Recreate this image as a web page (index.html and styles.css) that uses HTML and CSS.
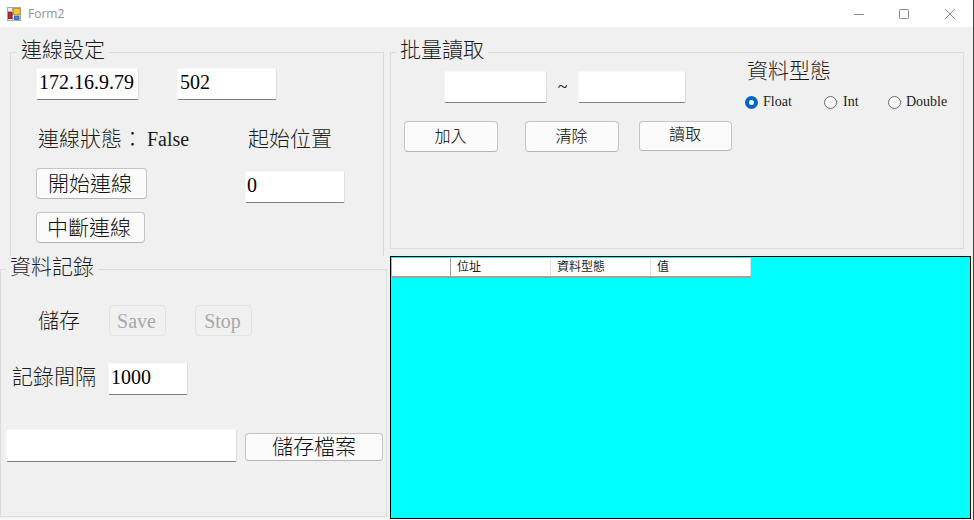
FILE: index.html
```html
<!DOCTYPE html>
<html>
    <head>
        <meta charset="utf-8">
        <title>Form2</title>
        <link rel="stylesheet" href="styles.css">
    </head>
    <body>
        <header class="titlebar">
            <svg class="app-icon" width="14" height="14" viewBox="0 0 14 14">
                <rect x="0.5" y="0.5" width="13" height="13" fill="#ececec" stroke="#a8a8a8"/>
                <path d="M0 4.5H6M5.5 0V14M0 11.5H14" stroke="#b4b4b4" fill="none"/>
                <rect x="6.5" y="1.5" width="6.5" height="6" fill="#f7c928" stroke="#b98a10" stroke-width="0.8"/>
                <rect x="1.5" y="5.5" width="3.5" height="6" fill="#c8262a" stroke="#7d1618" stroke-width="0.8"/>
                <rect x="7.5" y="9" width="4.5" height="3.5" fill="#3f7fe0" stroke="#2a5ca8" stroke-width="0.8"/>
            </svg>
            <span class="title">Form2</span>
            <div class="win-buttons">
                <svg width="10" height="10" viewBox="0 0 10 10"><path d="M0 5.5H10" stroke="#8a8a8a"/></svg>
                <svg width="10" height="10" viewBox="0 0 10 10"><rect x="0.5" y="0.5" width="9" height="9" rx="1" fill="none" stroke="#8a8a8a"/></svg>
                <svg class="win-close" width="10" height="10" viewBox="0 0 10 10"><path d="M0 0L10 10M10 0L0 10" stroke="#8a8a8a"/></svg>
            </div>
        </header>

        <main class="client">
            <div class="left">
                <fieldset class="group conn">
                    <legend>連線設定</legend>
                    <div class="conn-top">
                        <input class="box ip" value="172.16.9.79">
                        <input class="box port" value="502">
                    </div>
                    <div class="conn-status">
                        <span class="label state">連線狀態：</span>
                        <span class="false">False</span>
                        <span class="label start-label">起始位置</span>
                    </div>
                    <div class="conn-actions">
                        <div class="conn-buttons">
                            <button class="btn open">開始連線</button>
                            <button class="btn stop-conn">中斷連線</button>
                        </div>
                        <input class="box start" value="0">
                    </div>
                </fieldset>

                <fieldset class="group log">
                    <legend>資料記錄</legend>
                    <div class="log-save">
                        <span class="label save-label">儲存</span>
                        <button class="btn off" disabled>Save</button>
                        <button class="btn off" disabled>Stop</button>
                    </div>
                    <div class="log-interval">
                        <span class="label interval-label">記錄間隔</span>
                        <input class="box interval" value="1000">
                    </div>
                    <div class="log-file">
                        <input class="box path">
                        <button class="btn file">儲存檔案</button>
                    </div>
                </fieldset>
            </div>

            <div class="right">
                <fieldset class="group batch">
                    <legend>批量讀取</legend>
                    <div class="batch-body">
                        <div class="batch-main">
                            <div class="range">
                                <input class="box from">
                                <span class="tilde">~</span>
                                <input class="box to">
                            </div>
                            <div class="batch-buttons">
                                <button class="btn small">加入</button>
                                <button class="btn small clear">清除</button>
                                <button class="btn small read">讀取</button>
                            </div>
                        </div>
                        <div class="types">
                            <div class="label">資料型態</div>
                            <div class="radios">
                                <label class="radio r-float"><input type="radio" name="type" checked>Float</label>
                                <label class="radio r-int"><input type="radio" name="type">Int</label>
                                <label class="radio"><input type="radio" name="type">Double</label>
                            </div>
                        </div>
                    </div>
                </fieldset>

                <div class="grid">
                    <div class="grid-head">
                        <div class="cell first"></div>
                        <div class="cell">位址</div>
                        <div class="cell">資料型態</div>
                        <div class="cell">值</div>
                    </div>
                </div>
            </div>
        </main>
    </body>
</html>
```

FILE: styles.css
```css
*{
    box-sizing: border-box;
}
body{
    margin: 0;
    width: 974px;
    height: 520px;
    overflow: hidden;
    background: #f8f8f8;
    border-right: 1px solid #444;
    color: #1c1c1c;
    font-family: "Liberation Serif", "Noto Sans CJK TC", serif;
    font-size: 20px;
}

.titlebar{
    display: flex;
    align-items: center;
    height: 27px;
    padding-left: 7px;
    background: #fff;
}
.app-icon{
    margin-right: 7px;
}
.title{
    font: 12px "Open Sans", sans-serif;
    color: #8f8f8f;
}
.win-buttons{
    display: flex;
    gap: 35px;
    margin-left: auto;
    margin-right: 18px;
}
.win-close{
    margin-left: 1px;
}

.client{
    display: flex;
    height: 491px;
    background: #f0f0f0;
}
.left{
    width: 390px;
    padding-top: 13px;
}
.right{
    width: 583px;
    padding-top: 13px;
}

.group{
    margin: 0;
    padding: 0;
    min-width: 0;
    border: 1px solid #dcdcdc;
}
.group legend{
    margin-left: 6px;
    padding: 0 4px 4px;
    height: 24px;
    line-height: 20px;
    font-size: 21px;
    font-weight: 300;
}
.label{
    font-size: 21px;
    font-weight: 300;
    line-height: 24px;
}

.box{
    display: block;
    padding: 0 2px 4px;
    height: 32px;
    background: #fff;
    border: 1px solid #f8f8f8;
    border-right-color: #dedede;
    border-bottom-color: #808080;
    border-radius: 2px;
    color: #000;
    font: inherit;
    outline: none;
}
.btn{
    display: block;
    padding: 0 3px 0 0;
    height: 31px;
    background: #fbfbfb;
    border: 1px solid #c4c4c4;
    border-bottom-color: #b4b4b4;
    border-radius: 4px;
    color: #111;
    font-family: inherit;
    font-size: 21px;
    font-weight: 300;
    line-height: 22px;
}
.btn.off{
    width: 57px;
    padding: 0 2px 0 0;
    background: #f0f0f0;
    border-color: #e2e2e2;
    color: #a8a8a8;
    font-size: 20px;
}
.btn.small{
    width: 94px;
    padding: 0 1px 0 0;
    color: #000;
    font-size: 16px;
    font-weight: 300;
}

/* 連線設定 */
.conn{
    margin-left: 10px;
    width: 374px;
    height: 216px;
    border-bottom: 0;
}
.conn-top{
    display: flex;
    gap: 38px;
    margin-top: 4px;
    padding-left: 25px;
}
.ip{
    width: 103px;
}
.port{
    width: 100px;
}
.conn-status{
    display: flex;
    align-items: center;
    margin-top: 27px;
    padding-left: 27px;
}
.state{
    width: 109px;
}
.false{
    width: 101px;
}
.conn-actions{
    display: flex;
    margin-top: 17px;
    padding-left: 25px;
}
.conn-buttons{
    width: 209px;
}
.open{
    width: 111px;
}
.stop-conn{
    width: 109px;
    margin-top: 13px;
}
.start{
    width: 100px;
    margin-top: 3px;
    padding-left: 1px;
}

/* 資料記錄 */
.log{
    width: 387px;
    height: 260px;
    margin-top: 1px;
}
.log legend{
    margin-left: 5px;
}
.log-save{
    display: flex;
    align-items: center;
    margin-top: 24px;
    padding-left: 37px;
}
.save-label{
    width: 71px;
}
.log-save .off + .off{
    margin-left: 29px;
}
.log-interval{
    display: flex;
    align-items: center;
    margin-top: 27px;
    padding-left: 11px;
}
.interval-label{
    width: 96px;
    padding-bottom: 4px;
    line-height: 28px;
}
.interval{
    width: 80px;
}
.log-file{
    display: flex;
    gap: 8px;
    margin-top: 34px;
    padding-left: 5px;
}
.path{
    width: 231px;
    height: 33px;
}
.file{
    width: 138px;
    height: 28px;
    margin-top: 4px;
    padding: 0;
}

/* 批量讀取 */
.batch{
    width: 574px;
    height: 209px;
}
.batch legend{
    margin-left: 5px;
}
.batch-body{
    display: flex;
}
.batch-main{
    width: 356px;
}
.range{
    display: flex;
    margin-top: 7px;
    padding-left: 53px;
}
.from{
    width: 103px;
}
.to{
    width: 108px;
}
.tilde{
    width: 31px;
    text-align: center;
    font-size: 18px;
    line-height: 32px;
}
.batch-buttons{
    display: flex;
    margin-top: 18px;
    padding-left: 13px;
}
.clear{
    margin-left: 27px;
}
.btn.read{
    width: 93px;
    height: 30px;
    margin-left: 20px;
    padding-bottom: 3px;
}
.types{
    margin-top: -5px;
}
.radios{
    display: flex;
    margin-top: 12px;
    margin-left: -2px;
}
.radio{
    display: flex;
    align-items: center;
    gap: 5px;
    font-size: 14px;
    line-height: 14px;
}
.radio input{
    appearance: none;
    width: 13px;
    height: 13px;
    margin: 0;
    background: #f6f6f6;
    border: 1px solid #6e6e6e;
    border-radius: 50%;
}
.radio input:checked{
    background: #fff;
    border: 4px solid #0067c0;
}
.r-float{
    width: 79px;
}
.r-int{
    width: 64px;
    gap: 6px;
}

/* 表格 */
.grid{
    width: 581px;
    height: 263px;
    margin-top: 7px;
    background: #0ff;
    border: 1px solid #000;
}
.grid-head{
    display: flex;
    width: 359px;
    height: 20px;
    margin: 1px 0 0 1px;
    background: #fff;
    border-bottom: 2px solid #a0a0a0;
}
.cell{
    width: 100px;
    padding-left: 6px;
    border-right: 1px solid #e0e0e0;
    font-size: 12px;
    line-height: 18px;
}
.cell.first{
    width: 59px;
    border-right: 1px solid #a0a0a0;
}
```
